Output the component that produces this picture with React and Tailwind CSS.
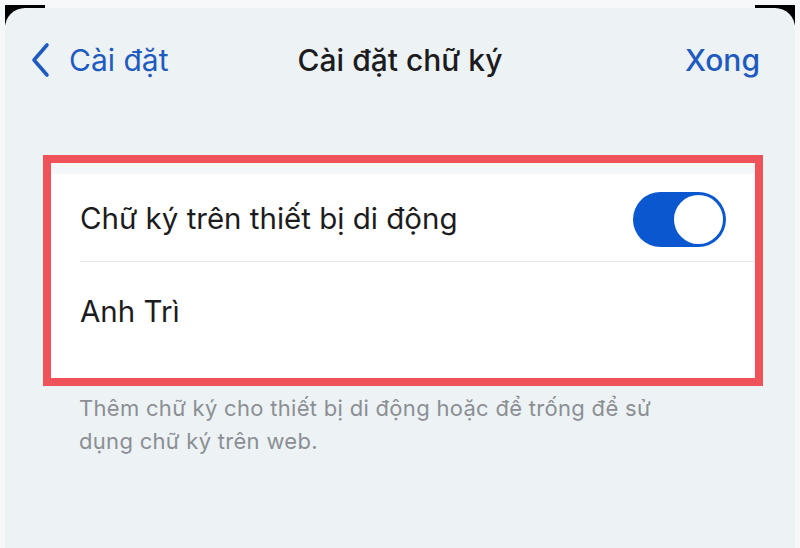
import React from 'react';

export default function App() {
  return (
    <div
      className="w-[800px] h-[548px] bg-[#f7f8f9] overflow-hidden relative"
      style={{ fontFamily: 'Inter, "Noto Sans", sans-serif' }}
    >
      {/* phone corners behind the sheet */}
      <div className="absolute left-[5px] top-[5px] w-[40px] h-[20px] bg-black" />
      <div className="absolute right-[5px] top-[5px] w-[40px] h-[20px] bg-black" />

      <div className="relative ml-[5px] mr-[5px] mt-[8px] h-[540px] bg-[#edf2f5] rounded-t-[20px]">
        {/* nav bar */}
        <div className="grid grid-cols-[1fr_auto_1fr] items-center h-[104px] px-[25px]">
          <div className="flex items-center gap-[17px] text-[#1f5bbf] text-[30px]">
            <svg width="22" height="36" viewBox="0 0 22 36" fill="none">
              <path d="M17 3 L4 18 L17 33" stroke="#1f5bbf" strokeWidth="3.6" strokeLinecap="round" strokeLinejoin="round" />
            </svg>
            <span>Cài đặt</span>
          </div>
          <div className="text-[30px] font-medium text-[#1c1c1e]">Cài đặt chữ ký</div>
          <div className="text-[30px] font-medium text-[#1f5bbf] pr-[10px] justify-self-end">Xong</div>
        </div>

        {/* highlighted settings group */}
        <div className="mt-[43px] ml-[38px] w-[720px] border-[8px] border-[#f0525a] bg-[#f4f7f9]">
          <div className="mt-[11px] bg-white">
            <div className="flex items-center justify-between h-[87px] pl-[29px] pr-[29px]">
              <span className="text-[29.5px] text-[#1c1c1e] pt-[2px]">Chữ ký trên thiết bị di động</span>
              <div className="w-[93px] h-[55px] mt-[4px] rounded-full bg-[#0b57d0] p-[3px] flex justify-end">
                <div className="w-[49px] h-[49px] rounded-full bg-white" />
              </div>
            </div>
            <div className="ml-[29px] h-px bg-[#e3e6ea]" />
            <div className="flex items-center h-[116px] pl-[29px] pb-[18px]">
              <span className="text-[29.5px] text-[#1c1c1e]">Anh Trì</span>
            </div>
          </div>
        </div>

        {/* footer note */}
        <p className="ml-[74px] mt-[6px] w-[610px] text-[22px] leading-[33px] tracking-[0.3px] text-[#8b8f94]">
          Thêm chữ ký cho thiết bị di động hoặc để trống để sử dụng chữ ký trên web.
        </p>
      </div>
    </div>
  );
}
